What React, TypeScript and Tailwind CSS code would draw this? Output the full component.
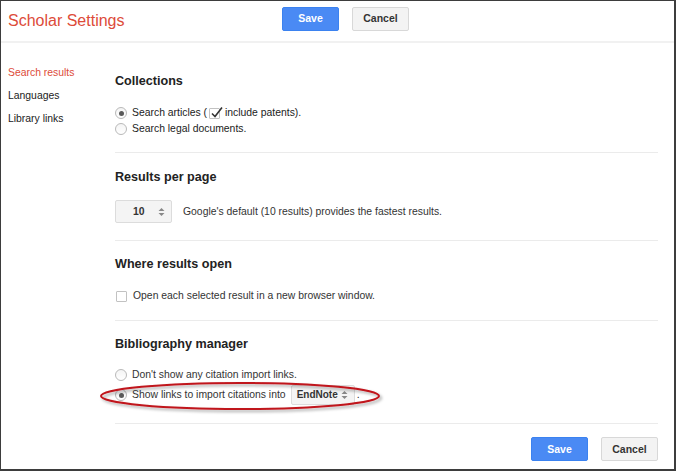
import React from "react";

function Radio({ checked }: { checked?: boolean }) {
  return (
    <span className="inline-flex items-center justify-center w-[12px] h-[12px] rounded-full border border-[#b9b9b9] bg-gradient-to-b from-[#f4f4f4] to-white mr-[5px] shrink-0">
      {checked && <span className="w-[5px] h-[5px] rounded-full bg-[#5a5a5a]" />}
    </span>
  );
}

function Check({ checked }: { checked?: boolean }) {
  return (
    <span className="relative inline-block w-[11px] h-[11px] border border-[#c2c2c2] bg-white shrink-0 rounded-[1px]">
      {checked && (
        <svg className="absolute -top-[3px] left-[0px]" width="14" height="13" viewBox="0 0 14 13">
          <path d="M2 7.5 L5 10.5 L12 1.5" fill="none" stroke="#333" strokeWidth="1.6" />
        </svg>
      )}
    </span>
  );
}

function Arrows() {
  return (
    <svg width="7" height="10" viewBox="0 0 7 10" className="shrink-0">
      <path d="M0.5 4 L3.5 1 L6.5 4 Z" fill="#888" />
      <path d="M0.5 6 L3.5 9 L6.5 6 Z" fill="#888" />
    </svg>
  );
}

function Btn({ primary, children }: { primary?: boolean; children: React.ReactNode }) {
  return primary ? (
    <button className="w-[57px] h-[24px] rounded-[2px] border border-[#3b82f0] bg-[#4a8af4] text-white text-[10.5px] font-bold">
      {children}
    </button>
  ) : (
    <button className="w-[57px] h-[24px] rounded-[2px] border border-[#d8d8d8] bg-[#f3f3f3] text-[#333] text-[10.5px] font-bold">
      {children}
    </button>
  );
}

export default function App() {
  return (
    <div
      className="w-[676px] h-[471px] bg-white border-t border-l border-r-2 border-b-2 border-[#3d3d3d] flex flex-col text-[#222] overflow-hidden"
      style={{ fontFamily: '"Liberation Sans", Arial, sans-serif' }}
    >
      {/* header */}
      <div className="h-[40px] flex items-center shrink-0">
        <div className="w-[281px] pl-[7px] text-[16px] text-[#dd4b39] leading-none">Scholar Settings</div>
        <div className="flex gap-[13px] -mt-[4px]">
          <Btn primary>Save</Btn>
          <Btn>Cancel</Btn>
        </div>
      </div>
      <div className="h-[2px] bg-[#f1f1f1] shrink-0" />

      <div className="flex flex-1 text-[10.4px] leading-[16px]">
        {/* nav */}
        <div className="w-[114px] pl-[7px] pt-[22px] flex flex-col gap-[7px] shrink-0">
          <div className="text-[#dd4b39]">Search results</div>
          <div>Languages</div>
          <div>Library links</div>
        </div>

        {/* content */}
        <div className="flex-1 pr-[16px] flex flex-col relative">
          {/* Collections */}
          <div className="pt-[30px] pb-[15px] border-b border-[#ebebeb]">
            <h2 className="text-[12.6px] font-bold leading-[16px] text-[#222]">Collections</h2>
            <div className="mt-[16px] flex items-center h-[16px]">
              <Radio checked />
              <span>Search articles (</span>
              <span className="mx-[2px] inline-flex"><Check checked /></span>
              <span>&nbsp;include patents).</span>
            </div>
            <div className="flex items-center h-[16px]">
              <Radio />
              <span>Search legal documents.</span>
            </div>
          </div>

          {/* Results per page */}
          <div className="pt-[16px] pb-[17px] border-b border-[#ebebeb]">
            <h2 className="text-[12.6px] font-bold leading-[16px]">Results per page</h2>
            <div className="mt-[15px] flex items-center">
              <div className="w-[57px] h-[23px] rounded-[2px] border border-[#dcdcdc] bg-[#f4f4f4] flex items-center pl-[17px] pr-[6px] justify-between">
                <span className="font-bold text-[#333]">10</span>
                <Arrows />
              </div>
              <span className="ml-[11px] text-[#333]">Google's default (10 results) provides the fastest results.</span>
            </div>
          </div>

          {/* Where results open */}
          <div className="pt-[15px] pb-[16px] border-b border-[#ebebeb]">
            <h2 className="text-[12.6px] font-bold leading-[16px]">Where results open</h2>
            <div className="mt-[16px] flex items-center h-[16px]">
              <span className="mr-[6px] ml-[1px] inline-flex"><Check /></span>
              <span className="text-[#333]">Open each selected result in a new browser window.</span>
            </div>
          </div>

          {/* Bibliography manager */}
          <div className="pt-[15px] pb-[16px] border-b border-[#ebebeb] relative">
            <h2 className="text-[12.6px] font-bold leading-[16px]">Bibliography manager</h2>
            <div className="mt-[15px] flex items-center h-[16px]">
              <Radio />
              <span className="text-[#333]">Don't show any citation import links.</span>
            </div>
            <div className="flex items-center h-[24px]">
              <Radio checked />
              <span className="text-[#333]">Show links to import citations into</span>
              <div className="ml-[5px] w-[64px] h-[20px] rounded-[2px] border border-[#dcdcdc] bg-[#f4f4f4] flex items-center justify-between pl-[5px] pr-[6px]">
                <span className="font-bold text-[#333] text-[10px]">EndNote</span>
                <Arrows />
              </div>
              <span className="ml-[2px]">.</span>
            </div>
            {/* red ellipse annotation */}
            <svg
              className="absolute left-[-16px] top-[60px] pointer-events-none"
              width="292"
              height="34"
              viewBox="0 0 292 34"
            >
              <defs>
                <filter id="sh" x="-10%" y="-30%" width="120%" height="160%">
                  <feDropShadow dx="2" dy="2" stdDeviation="1.5" floodColor="#000" floodOpacity="0.35" />
                </filter>
              </defs>
              <ellipse cx="141" cy="15" rx="139" ry="13" fill="none" stroke="#c0141b" strokeWidth="2" filter="url(#sh)" />
            </svg>
          </div>

          {/* footer */}
          <div className="flex justify-end gap-[13px] pt-[13px]">
            <Btn primary>Save</Btn>
            <Btn>Cancel</Btn>
          </div>
        </div>
      </div>
    </div>
  );
}
